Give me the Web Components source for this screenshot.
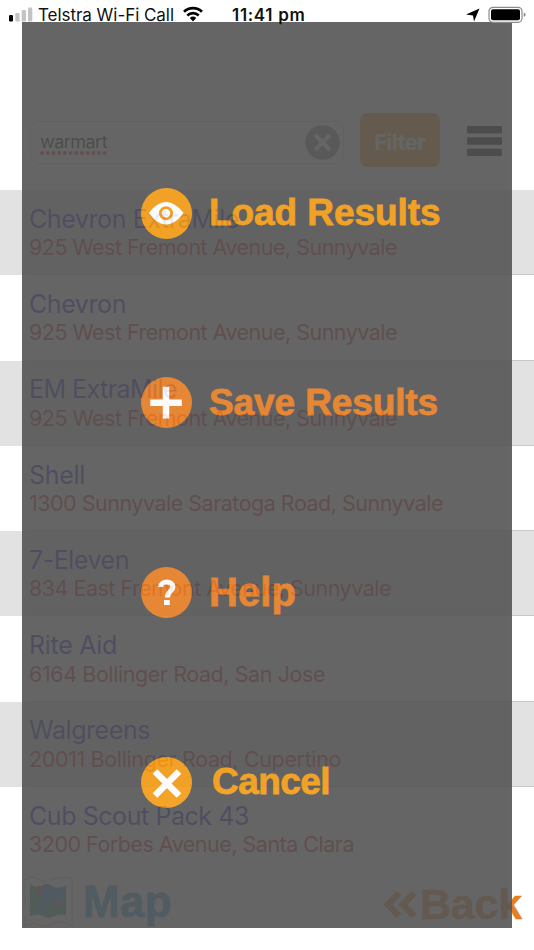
<!DOCTYPE html>
<html lang="en">
<head>
<meta charset="utf-8">
<title>Search results</title>
<style>
  body {
    margin: 0;
    background: #fff;
    font-family: Inter, "Liberation Sans", sans-serif;
  }
</style>
</head>
<body>
<results-screen></results-screen>

<script>
function attachTemplate(element, html) {
  const template = document.createElement("template");
  template.innerHTML = html;
  const shadow = element.attachShadow({ mode: "open" });
  shadow.appendChild(template.content.cloneNode(true));
  return shadow;
}

// Single line of text, tracked to take up the given width
class FitText extends HTMLElement {
  constructor() {
    super();
    attachTemplate(this, `
    <style>
      :host { display: block; width: max-content; white-space: nowrap; }
    </style>
    <slot></slot>
    `);
  }
  connectedCallback() {
    const width = Number(this.getAttribute("width"));
    this.style.letterSpacing = "0";
    const natural = this.getBoundingClientRect().width;
    this.style.letterSpacing = (width - natural) / this.textContent.length + "px";
  }
}

class StatusBar extends HTMLElement {
  constructor() {
    super();
    attachTemplate(this, `
    <style>
      :host {
        display: flex;
        align-items: center;
        box-sizing: border-box;
        height: 30px;
        padding-left: 9px;
        font-size: 17px;
        line-height: 30px;
        color: #111;
      }
      svg { display: block; flex: none; }
      .carrier { margin-left: 5px; width: 145px; }
      .time { margin-left: 29px; width: 234px; font-weight: 600; font-size: 17px; }
      .location { margin-right: 8px; }
    </style>
    <svg width="24" height="30" viewBox="0 0 24 30">
      <rect x="0" y="15" width="4" height="6.500" rx="1.200" fill="#000"/>
      <rect x="6.300" y="13" width="4.300" height="8.500" rx="1.200" fill="#c4c4c4"/>
      <rect x="12.700" y="10" width="4.300" height="11.500" rx="1.200" fill="#c4c4c4"/>
      <rect x="19" y="7.500" width="4.300" height="14" rx="1.200" fill="#c4c4c4"/>
    </svg>
    <div class="carrier"><fit-text width="136">Telstra Wi-Fi Call</fit-text></div>
    <svg width="20" height="30" viewBox="0 0 20 30" fill="none" stroke="#000" stroke-width="2.700">
      <path d="M1 11.800a13 13 0 0 1 18 0"/>
      <path d="M4.300 15.400a8.300 8.300 0 0 1 11.400 0"/>
      <path d="M6.800 18a4.800 4.800 0 0 1 6.400 0L10 21.600z" fill="#000" stroke="none"/>
    </svg>
    <div class="time"><fit-text width="73.500">11:41 pm</fit-text></div>
    <svg class="location" width="14" height="30" viewBox="0 0 14 30">
      <path d="M13.500 8.500L8 21.500L7 15.500L0 14.600z" fill="#000"/>
    </svg>
    <svg width="38" height="30" viewBox="0 0 38 30">
      <rect x="1" y="7.300" width="33" height="15" rx="4" fill="#fff" stroke="#8c8c8c" stroke-width="1.200"/>
      <rect x="3" y="9.300" width="29" height="11" rx="2" fill="#000"/>
      <path d="M35.700 12.500q2 1 2 2.300t-2 2.300z" fill="#8c8c8c"/>
    </svg>
    `);
  }
}

class SearchBar extends HTMLElement {
  constructor() {
    super();
    attachTemplate(this, `
    <style>
      :host {
        display: flex;
        align-items: center;
        box-sizing: border-box;
        height: 54px;
        margin-top: 83px;
        padding-left: 30px;
      }
      svg { display: block; }
      .field {
        box-sizing: border-box;
        display: flex;
        align-items: center;
        justify-content: space-between;
        width: 314px;
        height: 43px;
        margin-top: 5px;
        padding: 0 3px 0 9px;
        border: 1px solid #d4d4d4;
        border-radius: 8px;
        color: #000;
        font-size: 18px;
      }
      .word { padding-top: 1px; line-height: 20px; }
      .word svg { margin-top: -1px; }
      .filter {
        display: flex;
        align-items: center;
        justify-content: center;
        width: 80px;
        height: 54px;
        margin: 0 27px 0 16px;
        padding-top: 4px;
        box-sizing: border-box;
        border-radius: 7px;
        background: #f39c12;
        color: #fff;
        font-weight: 700;
        font-size: 21px;
      }
      .bars { margin-top: 2px; }
    </style>
    <div class="field">
      <div class="word">
        <fit-text width="67">warmart</fit-text>
        <svg width="68" height="4"><path d="M2 2H67" stroke="#ff1c10" stroke-width="3.800" stroke-linecap="round" stroke-dasharray="0 5.700"/></svg>
      </div>
      <svg width="35" height="35" viewBox="0 0 35 35">
        <circle cx="17.500" cy="17.500" r="17.300" fill="#858585"/>
        <path d="M10 10L25 25M25 10L10 25" stroke="#fff" stroke-width="4"/>
      </svg>
    </div>
    <div class="filter"><fit-text width="51">Filter</fit-text></div>
    <svg class="bars" width="35" height="30" viewBox="0 0 35 30">
      <rect y="0" width="35" height="7.500" rx="1"/>
      <rect y="11.300" width="35" height="7.500" rx="1"/>
      <rect y="22.700" width="35" height="7.300" rx="1"/>
    </svg>
    `);
  }
}

class ResultRow extends HTMLElement {
  constructor() {
    super();
    attachTemplate(this, `
    <style>
      :host {
        display: block;
        box-sizing: border-box;
        height: 85.300px;
        padding: 12.700px 0 0 29px;
        background: linear-gradient(#c8c8c8, #c8c8c8) 29px 100% / 100% 1px no-repeat;
      }
      :host(:nth-child(odd)) { background-color: #e2e2e2; }
      :host(:last-child) { background: none; }
      .name { font-size: 25px; line-height: 32px; color: #1414c8; }
      .address { margin-top: -.600px; font-size: 21.500px; line-height: 26px; color: #c81414; }
    </style>
    <div class="name"><slot name="name"></slot></div>
    <div class="address"><slot name="address"></slot></div>
    `);
  }
}

class BottomBar extends HTMLElement {
  constructor() {
    super();
    attachTemplate(this, `
    <style>
      :host {
        display: flex;
        align-items: center;
        box-sizing: border-box;
        height: 56px;
        padding: 0 12px 0 23px;
        font: 700 42px/56px "Liberation Sans", sans-serif;
      }
      svg { display: block; }
      .map {
        margin-left: 10px;
        color: #3498db;
        font-size: 44px;
        -webkit-text-stroke: .8px currentColor;
      }
      .chevrons { margin-left: auto; margin-right: 3px; padding-top: 6px; }
      .back {
        padding-top: 5px;
        color: #e67e22;
        font-size: 43px;
        -webkit-text-stroke: .4px currentColor;
      }
    </style>
    <svg width="50" height="50" viewBox="0 0 50 50">
      <path d="M1 3q8-4 14-1q7 4 13 1q8-5 21-1V48q-12-5-20-1q-7 4-14 1q-6-3-14 1q3-5 0-10t0-10t0-12z" fill="#fff" stroke="#c4c4c4" stroke-width="1.200"/>
      <path d="M7 7q6 5 11 2q6-4 11 0q6 4 14-1V38q-7-2-11 1q-6 3-12 0q-6-3-13 0z" fill="#3c8fd0"/>
      <path d="M7 7q4 3.500 8 3L18 20L14 38Q11 38 7 39zM22 30L30 26L36 30L43 20V38q-7-2-11 1q-6 3-12 0z" fill="#35a06a" opacity=".8"/>
      <path d="M13.500 13a2.800 2.800 0 1 1 5 0L16 19z" fill="#f03b3b"/>
      <path d="M32.500 26a2.800 2.800 0 1 1 5 0L35 32z" fill="#c060a8"/>
    </svg>
    <div class="map"><fit-text width="89">Map</fit-text></div>
    <svg class="chevrons" width="33" height="27" viewBox="0 0 33 27" fill="none" stroke="#e67e22" stroke-width="6.500">
      <path d="M15 2L4 13.500L15 25M30 2L19 13.500L30 25"/>
    </svg>
    <div class="back"><fit-text width="102">Back</fit-text></div>
    `);
  }
}

const MENU_ICONS = {
  eye: `<path d="M8 25C13 18 19 14 25 14S37 18 42.500 25C37 32.500 31 36.500 25 36.500S13 32.500 8 25z" fill="#fff"/>
        <circle cx="25" cy="25.200" r="5.600" fill="none" stroke="currentColor" stroke-width="2.800"/>`,
  plus: `<path d="M25 9.800V41.500M9.300 25.700H40.800" stroke="#fff" stroke-width="6.500"/>`,
  help: `<path d="M19.600 20C19.800 13.300 31.900 13.300 31.900 20C31.900 24.300 26.300 24.300 26.300 30.500" fill="none" stroke="#fff" stroke-width="5"/>
        <rect x="23" y="33" width="5.700" height="5" fill="#fff"/>`,
  close: `<path d="M14 14.500L38 38.500M38 14.500L14 38.500" stroke="#fff" stroke-width="6.500"/>`
};

class MenuItem extends HTMLElement {
  constructor() {
    super();
    attachTemplate(this, `
    <style>
      :host {
        display: flex;
        align-items: center;
        gap: 17.500px;
        height: 51px;
        color: #e67e22;
        font: 700 37px/49px "Liberation Sans", sans-serif;
      }
      :host([bright]) { color: #f39c12; }
      :host([icon="help"]) { font-size: 40px; line-height: 46px; }
      svg { display: block; flex: none; }
      .label { -webkit-text-stroke: .8px currentColor; margin-top: -1px; }
    </style>
    <svg width="51" height="51" viewBox="0 0 51 51">
      <circle cx="25.500" cy="25.500" r="25.500" fill="currentColor"/>
      ${MENU_ICONS[this.getAttribute("icon")]}
    </svg>
    <div class="label"><slot></slot></div>
    `);
  }
}

class MenuOverlay extends HTMLElement {
  constructor() {
    super();
    attachTemplate(this, `
    <style>
      :host {
        position: absolute;
        inset: 22px;
        z-index: 1;
        display: flex;
        flex-direction: column;
        gap: 138.700px;
        box-sizing: border-box;
        padding: 165.500px 0 0 118.500px;
        background: #555;
        opacity: .9;
      }
    </style>
    <slot></slot>
    `);
  }
}

class ResultsScreen extends HTMLElement {
  constructor() {
    super();
    const results = [
      ["Chevron ExtraMile", 210, "925 West Fremont Avenue, Sunnyvale", 368],
      ["Chevron", 97, "925 West Fremont Avenue, Sunnyvale", 368],
      ["EM ExtraMile", 148, "925 West Fremont Avenue, Sunnyvale", 368],
      ["Shell", 56, "1300 Sunnyvale Saratoga Road, Sunnyvale", 414],
      ["7-Eleven", 100, "834 East Fremont Avenue, Sunnyvale", 362],
      ["Rite Aid", 88, "6164 Bollinger Road, San Jose", 296],
      ["Walgreens", 121, "20011 Bollinger Road, Cupertino", 312],
      ["Cub Scout Pack 43", 220, "3200 Forbes Avenue, Santa Clara", 325]
    ];
    attachTemplate(this, `
    <style>
      :host {
        display: block;
        position: relative;
        height: 950px;
        overflow: hidden;
      }
      status-bar { position: relative; z-index: 2; }
      .list { margin-top: 23px; height: 683.500px; }
    </style>
    <status-bar></status-bar>
    <search-bar></search-bar>
    <div class="list">
      ${results.map(([name, nameWidth, address, addressWidth]) => `
      <result-row>
        <fit-text slot="name" width="${nameWidth}">${name}</fit-text>
        <fit-text slot="address" width="${addressWidth}">${address}</fit-text>
      </result-row>`).join("")}
    </div>
    <bottom-bar></bottom-bar>
    <menu-overlay>
      <menu-item icon="eye" bright><fit-text width="231.500">Load Results</fit-text></menu-item>
      <menu-item icon="plus"><fit-text width="229">Save Results</fit-text></menu-item>
      <menu-item icon="help"><fit-text width="87">Help</fit-text></menu-item>
      <menu-item icon="close" bright><fit-text width="118" style="margin-left: 3px">Cancel</fit-text></menu-item>
    </menu-overlay>
    `);
  }
}

customElements.define("result-row", ResultRow);
customElements.define("menu-item", MenuItem);
customElements.define("menu-overlay", MenuOverlay);
customElements.define("status-bar", StatusBar);
customElements.define("search-bar", SearchBar);
customElements.define("bottom-bar", BottomBar);
customElements.define("results-screen", ResultsScreen);
customElements.define("fit-text", FitText);
</script>
</body>
</html>
